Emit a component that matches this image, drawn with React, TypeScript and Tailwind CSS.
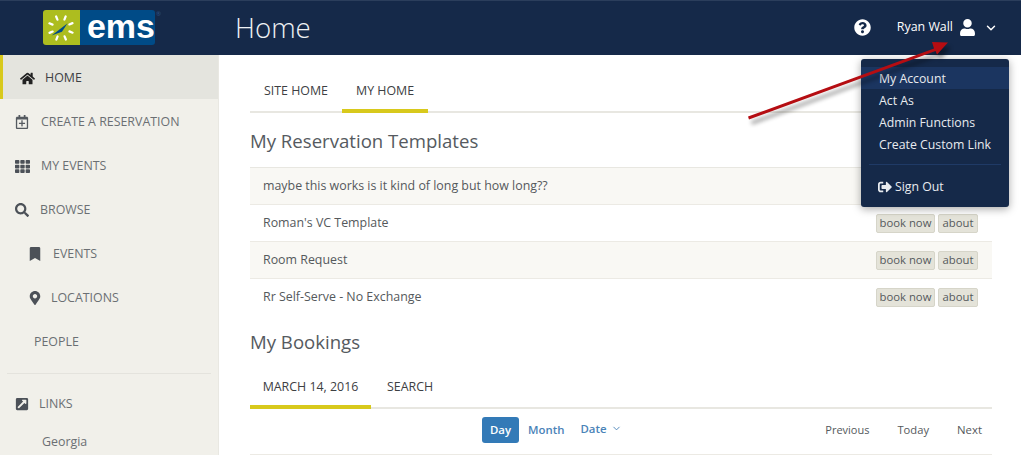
import { ChevronDown } from "lucide-react";
import {
  FaBookmark,
  FaExternalLinkSquareAlt,
  FaHome,
  FaMapMarkerAlt,
  FaQuestionCircle,
  FaRegCalendarPlus,
  FaSearch,
  FaSignOutAlt,
  FaTh,
  FaUser,
} from "react-icons/fa";

const templates = [
  "maybe this works is it kind of long but how long??",
  "Roman's VC Template",
  "Room Request",
  "Rr Self-Serve - No Exchange",
];

const arrowPath = "M748 116.5 L934 48.5 L932 42 L948 42.5 L937 54.5 L935.5 51 L749 119.5 Z";

function Logo() {
  const ticks = [0, 45, 90, 135, 180, 225, 270, 315];

  return (
    <div className="relative flex h-[35px] w-[112px] rounded-[3px]">
      <div className="grid w-[40px] place-items-center rounded-l-[3px] bg-[#adbd1f]">
        <svg width="30" height="30" viewBox="0 0 32 32" aria-hidden="true">
          {ticks.map((angle) => (
            <rect key={angle} x="14.8" y="1.5" width="2.4" height="6" rx="1.2" fill="#fff" transform={`rotate(${angle + 22} 16 16)`} />
          ))}
          <path d="M6 24 L23 11 L17 20 Z" fill="#004b87" />
        </svg>
      </div>
      <div className="flex flex-1 items-center rounded-r-[3px] bg-[#004b87] pb-[4px] pl-[7px] font-['Liberation_Sans',sans-serif] text-[34px] font-bold leading-none text-white">
        ems
      </div>
      <span className="absolute left-[113px] top-0 text-[6px] leading-[8px] text-[#2d5488]">®</span>
    </div>
  );
}

function NavItem({
  icon,
  label,
  className = "",
}: {
  icon?: React.ReactNode;
  label: string;
  className?: string;
}) {
  return (
    <div className={`flex h-[44px] items-center pt-[2px] text-[12.4px] text-[#6b6f73] ${className}`}>
      {icon}
      {label}
    </div>
  );
}

function ActionButton({ label, className }: { label: string; className: string }) {
  return (
    <span className={`flex h-[19px] items-center justify-center rounded-[2px] border border-[#d6d5c9] bg-[#e4e3d9] text-[11.3px] text-[#55595c] ${className}`}>
      {label}
    </span>
  );
}

export default function App() {
  return (
    <div className="relative h-[455px] w-[1021px] overflow-hidden bg-white font-['Open_Sans',sans-serif]">
      <header className="flex h-[55px] items-center border-t border-[#2b3e5c] bg-[#152949] pb-[1px] text-white">
        <div className="w-[235px] pl-[43px]">
          <Logo />
        </div>
        <h1 className="pt-[1px] text-[27.7px] font-light leading-none text-[#eef1f4]">Home</h1>
        <div className="ml-auto flex items-center pr-[23px]">
          <FaQuestionCircle className="mr-[26px] size-[17px]" aria-hidden="true" />
          <span className="text-[12.4px]">Ryan Wall</span>
          <FaUser className="ml-[6px] size-[17px]" aria-hidden="true" />
          <ChevronDown className="ml-[8px] mt-[2px] size-[14px]" strokeWidth={2.5} aria-hidden="true" />
        </div>
      </header>

      <div className="flex h-[400px]">
        <aside className="w-[219px] shrink-0 border-r border-[#e9e8e2] bg-[#f1f0ea]">
          <div className="flex h-[44px] items-center border-l-[3px] border-[#d8c91c] bg-[#e4e4de] pl-[17px] pt-[2px] text-[12.4px] text-[#3d4043]">
            <FaHome className="mr-[10px] size-[15px] text-[#222]" aria-hidden="true" />
            HOME
          </div>
          <NavItem className="pl-[15px]" label="CREATE A RESERVATION" icon={<FaRegCalendarPlus className="mr-[12px] size-[14px] text-[#555a60]" aria-hidden="true" />} />
          <NavItem className="pl-[15px]" label="MY EVENTS" icon={<FaTh className="mr-[11px] size-[15px] text-[#4c5158]" aria-hidden="true" />} />
          <NavItem className="pl-[15px]" label="BROWSE" icon={<FaSearch className="mr-[11px] size-[14px] text-[#4c5158]" aria-hidden="true" />} />
          <NavItem className="pl-[28px]" label="EVENTS" icon={<FaBookmark className="mr-[11px] size-[14px] text-[#4c5158]" aria-hidden="true" />} />
          <NavItem className="pl-[28px]" label="LOCATIONS" icon={<FaMapMarkerAlt className="mr-[9px] size-[14px] text-[#4c5158]" aria-hidden="true" />} />
          <NavItem className="pl-[34px]" label="PEOPLE" />
          <div className="mx-[7px] mt-[10px] h-[1px] bg-[#e4e3dd]" />
          <NavItem className="mt-[7px] pl-[15px]" label="LINKS" icon={<FaExternalLinkSquareAlt className="mr-[10px] size-[14px] text-[#4c5158]" aria-hidden="true" />} />
          <div className="pl-[42px] pt-[8px] text-[12.4px] text-[#6b6f73]">Georgia</div>
        </aside>

        <main className="box-content w-[742px] pl-[31px]">
          <div className="mt-[16px] flex h-[42px] border-b-2 border-[#e8e7e1] text-[12.4px] text-[#3d4043]">
            <div className="flex h-[42px] items-center px-[14px] pb-[2px]">SITE HOME</div>
            <div className="flex h-[42px] items-center border-b-4 border-[#d8c91c] px-[14px] pt-[2px]">MY HOME</div>
          </div>

          <h2 className="mb-[13px] mt-[14px] text-[18.6px] leading-[27px] text-[#555a60]">My Reservation Templates</h2>

          <div className="border-t border-[#e8e7e1] text-[12.4px] text-[#55595c]">
            {templates.map((name, index) => (
              <div
                key={name}
                className={`flex h-[37px] items-center justify-between pl-[13px] pr-[14px] ${index === templates.length - 1 ? "" : "border-b border-[#eceae4]"} ${index % 2 === 0 ? "bg-[#f9f8f4]" : "bg-white"}`}
              >
                <span>{name}</span>
                {/* the first row's buttons sit behind the open account menu */}
                {index > 0 ? (
                  <span className="flex gap-[3px]">
                    <ActionButton label="book now" className="w-[59px]" />
                    <ActionButton label="about" className="w-[40px]" />
                  </span>
                ) : null}
              </div>
            ))}
          </div>

          <h2 className="mt-[12px] text-[18.6px] leading-[27px] text-[#555a60]">My Bookings</h2>

          <div className="mt-[15px] flex h-[39px] border-b-2 border-[#e8e7e1] text-[12.4px] text-[#3d4043]">
            <div className="flex h-[39px] w-[121px] items-center justify-center border-b-4 border-[#d8c91c] pb-[1px]">MARCH 14, 2016</div>
            <div className="flex h-[37px] items-center pb-[3px] pl-[16px]">SEARCH</div>
          </div>

          <div className="flex h-[46px] items-center border-b border-[#eceae4] pb-[3px] text-[11.4px]">
            <div className="ml-[232px] flex h-[26px] w-[37px] items-center justify-center rounded-[3px] bg-[#337ab7] font-semibold text-white">Day</div>
            <span className="ml-[9px] font-semibold text-[#4a83b8]">Month</span>
            <span className="ml-[16px] flex items-center pb-[2px] font-semibold text-[#4a83b8]">
              Date
              <ChevronDown className="ml-[5px] size-[11px]" aria-hidden="true" />
            </span>
            <span className="ml-auto text-[11px] text-[#55595c]">Previous</span>
            <span className="ml-[28px] text-[11.2px] text-[#55595c]">Today</span>
            <span className="ml-[28px] mr-[10px] text-[#55595c]">Next</span>
          </div>
        </main>
      </div>

      <div className="absolute left-[861px] top-[59px] w-[148px] rounded-[3px] bg-[#152949] pt-[8px] text-[12.3px] text-[#e8ebef] shadow-[0_2px_8px_rgba(0,0,0,0.35)]">
        <div className="flex h-[22px] items-center bg-[#1b3560] pl-[18px] pt-[3px]">My Account</div>
        <div className="flex h-[22px] items-center pl-[18px] pt-[3px]">Act As</div>
        <div className="flex h-[22px] items-center pl-[18px] pt-[3px]">Admin Functions</div>
        <div className="flex h-[22px] items-center pl-[18px] pt-[3px]">Create Custom Link</div>
        <div className="mx-[8px] mt-[9px] h-[1px] bg-[#1f3a66]" />
        <div className="flex h-[42px] items-center pl-[17px] pt-[2px]">
          <FaSignOutAlt className="mr-[3px] size-[14px]" aria-hidden="true" />
          Sign Out
        </div>
      </div>

      {/* annotation arrow drawn over the screenshot */}
      <svg className="pointer-events-none absolute left-0 top-0" width="1021" height="455" aria-hidden="true">
        <path d={arrowPath} fill="#000" opacity="0.4" transform="translate(3 5)" style={{ filter: "blur(2px)" }} />
        <path d={arrowPath} fill="#b50d12" />
      </svg>
    </div>
  );
}
